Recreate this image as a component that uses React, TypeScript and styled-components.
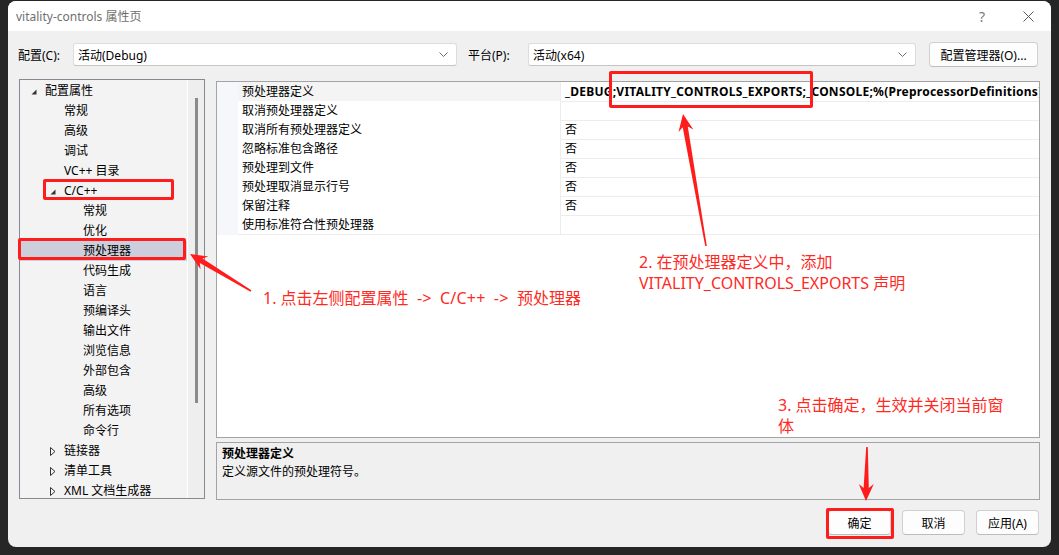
import React from 'react';
import styled, { createGlobalStyle } from 'styled-components';

const UI_FONT = `"Noto Sans", "Noto Sans CJK SC", sans-serif`;
const RED = '#ff1c1c';

type Expander = 'open' | 'closed' | undefined;

interface TreeItem {
	label: string;
	level: number;
	expander?: Expander;
	selected?: boolean;
}

const treeItems: TreeItem[] = [
	{ label: '配置属性', level: 0, expander: 'open' },
	{ label: '常规', level: 1 },
	{ label: '高级', level: 1 },
	{ label: '调试', level: 1 },
	{ label: 'VC++ 目录', level: 1 },
	{ label: 'C/C++', level: 1, expander: 'open' },
	{ label: '常规', level: 2 },
	{ label: '优化', level: 2 },
	{ label: '预处理器', level: 2, selected: true },
	{ label: '代码生成', level: 2 },
	{ label: '语言', level: 2 },
	{ label: '预编译头', level: 2 },
	{ label: '输出文件', level: 2 },
	{ label: '浏览信息', level: 2 },
	{ label: '外部包含', level: 2 },
	{ label: '高级', level: 2 },
	{ label: '所有选项', level: 2 },
	{ label: '命令行', level: 2 },
	{ label: '链接器', level: 1, expander: 'closed' },
	{ label: '清单工具', level: 1, expander: 'closed' },
	{ label: 'XML 文档生成器', level: 1, expander: 'closed' }
];

const properties = [
	{ name: '预处理器定义', value: '_DEBUG;VITALITY_CONTROLS_EXPORTS;_CONSOLE;%(PreprocessorDefinitions)', selected: true },
	{ name: '取消预处理器定义', value: '' },
	{ name: '取消所有预处理器定义', value: '否' },
	{ name: '忽略标准包含路径', value: '否' },
	{ name: '预处理到文件', value: '否' },
	{ name: '预处理取消显示行号', value: '否' },
	{ name: '保留注释', value: '否' },
	{ name: '使用标准符合性预处理器', value: '' }
];

// tail -> tip, tapered shaft with a barbed head
function arrowPoints(x1: number, y1: number, x2: number, y2: number) {
	const dx = x2 - x1;
	const dy = y2 - y1;
	const len = Math.hypot(dx, dy);
	const ux = dx / len;
	const uy = dy / len;
	const nx = -uy;
	const ny = ux;
	const head = 17;
	const at = (d: number, w: number) => [x1 + ux * d + nx * w, y1 + uy * d + ny * w];
	const pts = [
		at(0, 0.8),
		at(len - head + 4, 2.6),
		at(len - head, 7.5),
		[x2, y2],
		at(len - head, -7.5),
		at(len - head + 4, -2.6),
		at(0, -0.8)
	];
	return pts.map(p => p.map(v => v.toFixed(1)).join(',')).join(' ');
}

export default function App() {
	return (
		<Screen>
			<GlobalStyle />
			<Dialog>
				<TitleBar>
					<span>vitality-controls 属性页</span>
					<TitleButtons>
						<TitleButton>?</TitleButton>
						<TitleButton>
							<svg width="11" height="11" viewBox="0 0 11 11">
								<path d="M0.5 0.5 L10.5 10.5 M10.5 0.5 L0.5 10.5" stroke="#5a5a5a" strokeWidth="1" />
							</svg>
						</TitleButton>
					</TitleButtons>
				</TitleBar>

				<Body>
					<ConfigRow>
						<FieldLabel $width={55}>配置(C):</FieldLabel>
						<Select $width={384}>
							<span>活动(Debug)</span>
							<Chevron />
						</Select>
						<FieldLabel $width={60}>平台(P):</FieldLabel>
						<Select $width={388}>
							<span>活动(x64)</span>
							<Chevron />
						</Select>
						<ManagerButton>配置管理器(O)...</ManagerButton>
					</ConfigRow>

					<Main>
						<TreePanel>
							<TreeList>
								{treeItems.map((item, i) => (
									<TreeRow key={i} $level={item.level} $selected={item.selected}>
										<ExpanderSlot>
											{item.expander === 'open' && (
												<svg width="6" height="6" viewBox="0 0 6 6">
													<polygon points="5.5,0.5 5.5,5.5 0.5,5.5" fill="#333" />
												</svg>
											)}
											{item.expander === 'closed' && (
												<svg width="6" height="9" viewBox="0 0 6 9">
													<polygon points="0.5,0.5 5,4.5 0.5,8.5" fill="none" stroke="#333" strokeWidth="1" />
												</svg>
											)}
										</ExpanderSlot>
										<span>{item.label}</span>
									</TreeRow>
								))}
							</TreeList>
							<ScrollTrack>
								<ScrollThumb />
							</ScrollTrack>
						</TreePanel>

						<RightColumn>
							<Grid>
								{properties.map((p, i) => (
									<PropRow key={i}>
										<GutterCell />
										<NameCell $selected={p.selected}>{p.name}</NameCell>
										<ValueCell $bold={p.selected}>{p.value}</ValueCell>
									</PropRow>
								))}
							</Grid>
							<Description>
								<DescTitle>预处理器定义</DescTitle>
								<div>定义源文件的预处理符号。</div>
							</Description>
						</RightColumn>
					</Main>

					<Footer>
						<DialogButton>确定</DialogButton>
						<DialogButton>取消</DialogButton>
						<DialogButton>应用(A)</DialogButton>
					</Footer>
				</Body>
			</Dialog>

			<Overlay>
				<RedBox $x={43} $y={179} $w={131} $h={21} />
				<RedBox $x={18} $y={238} $w={168} $h={22} />
				<RedBox $x={609} $y={71} $w={204} $h={37} />
				<RedBox $x={826} $y={508} $w={68} $h={31} />
				<ArrowLayer width="1059" height="555" viewBox="0 0 1059 555">
					<polygon points={arrowPoints(251, 291, 190, 254)} fill={RED} />
					<polygon points={arrowPoints(706, 246, 683, 114)} fill={RED} />
					<polygon points={arrowPoints(867, 447, 866, 501)} fill={RED} />
				</ArrowLayer>
				<Note $x={263} $y={288}>
					1. 点击左侧配置属性<Spaced> -&gt; C/C++ -&gt; </Spaced>预处理器
				</Note>
				<Note $x={639} $y={252}>
					2. 在预处理器定义中，添加
					<br />
					VITALITY_CONTROLS_EXPORTS 声明
				</Note>
				<Note $x={778} $y={395}>
					3. 点击确定，生效并关闭当前窗
					<br />
					体
				</Note>
			</Overlay>
		</Screen>
	);
}

function Chevron() {
	return (
		<ChevronIcon width="9" height="5" viewBox="0 0 9 5">
			<polyline points="0.5,0.5 4.5,4.5 8.5,0.5" fill="none" stroke="#6a6a6a" strokeWidth="1" />
		</ChevronIcon>
	);
}

const GlobalStyle = createGlobalStyle`
	html, body {
		margin: 0;
		padding: 0;
		background: #1f1f1f;
	}

	body {
		font-family: ${UI_FONT};
		font-size: 12px;
		color: #000;
	}

	* {
		box-sizing: border-box;
	}
`;

const Screen = styled.div`
	position: relative;
	width: 1059px;
	height: 555px;
	padding: 1px 8px 8px 8px;
	background: #262626;
	display: flex;
	overflow: hidden;
`;

const Dialog = styled.div`
	flex: 1;
	display: flex;
	flex-direction: column;
	background: #f0f0f0;
	border-radius: 8px;
	overflow: hidden;
`;

const TitleBar = styled.div`
	height: 30px;
	flex: none;
	display: flex;
	align-items: center;
	padding-left: 8px;
	background: #fff;
	color: #6f6f6f;
	font-size: 12px;
`;

const TitleButtons = styled.div`
	margin-left: auto;
	display: flex;
`;

const TitleButton = styled.div`
	width: 46px;
	height: 30px;
	display: flex;
	align-items: center;
	justify-content: center;
	color: #7a7a7a;
	font-size: 14px;
`;

const Body = styled.div`
	flex: 1;
	display: flex;
	flex-direction: column;
	padding: 11px 11px 12px 11px;
`;

const ConfigRow = styled.div`
	height: 25px;
	display: flex;
	align-items: center;
	margin-left: -1px;
`;

const FieldLabel = styled.label<{ $width: number }>`
	width: ${p => p.$width}px;
	flex: none;
	white-space: nowrap;
`;

const Select = styled.div<{ $width: number }>`
	width: ${p => p.$width}px;
	height: 23px;
	flex: none;
	margin-right: 11px;
	display: flex;
	align-items: center;
	padding: 0 8px 0 4px;
	background: #fff;
	border: 1px solid #dcdcdc;
	border-bottom-color: #c4c4c4;
	border-radius: 3px;
`;

const ChevronIcon = styled.svg`
	margin-left: auto;
`;

const ManagerButton = styled.div`
	width: 109px;
	height: 25px;
	margin-left: 2px;
	display: flex;
	align-items: center;
	justify-content: center;
	background: #fdfdfd;
	border: 1px solid #d0d0d0;
	border-bottom-color: #bcbcbc;
	border-radius: 4px;
`;

const Main = styled.div`
	margin-top: 12px;
	height: 421px;
	display: flex;
	gap: 11px;
`;

const TreePanel = styled.div`
	width: 186px;
	height: 420px;
	flex: none;
	display: flex;
	border: 1px solid #858a92;
	background: #f3f3f3;
	overflow: hidden;
`;

const TreeList = styled.div`
	flex: 1;
	padding-top: 1px;
`;

const TreeRow = styled.div<{ $level: number; $selected?: boolean }>`
	height: 20px;
	display: flex;
	align-items: center;
	padding-left: ${p => 11 + p.$level * 19}px;
	background: ${p => (p.$selected ? '#cccedb' : 'transparent')};
	white-space: nowrap;
	line-height: 20px;
`;

const ExpanderSlot = styled.span`
	width: 14px;
	flex: none;
	display: flex;
	align-items: center;
	padding-top: 1px;
`;

const ScrollTrack = styled.div`
	width: 17px;
	flex: none;
	border-left: 1px solid #fff;
	background: #eeeeee;
	display: flex;
	justify-content: center;
`;

const ScrollThumb = styled.div`
	width: 3px;
	height: 305px;
	margin-top: 18px;
	margin-left: 1px;
	background: #8a8a8a;
`;

const RightColumn = styled.div`
	flex: 1;
	display: flex;
	flex-direction: column;
	padding-top: 2px;
`;

const Grid = styled.div`
	height: 357px;
	border: 1px solid #a3a3a3;
	background: #fff;
	overflow: hidden;
`;

const PropRow = styled.div`
	height: 19px;
	display: grid;
	grid-template-columns: 21px 323px 1fr;
	line-height: 18px;
`;

const GutterCell = styled.div`
	background: #f6f7fa;
`;

const NameCell = styled.div<{ $selected?: boolean }>`
	padding: 1px 0 0 4px;
	border-right: 1px solid #ededed;
	border-bottom: 1px solid #ededed;
	background: ${p => (p.$selected ? '#f4f4f4' : '#fff')};
	white-space: nowrap;
`;

const ValueCell = styled.div<{ $bold?: boolean }>`
	padding: 1px 0 0 4px;
	border-bottom: 1px solid #ededed;
	font-weight: ${p => (p.$bold ? 700 : 400)};
	letter-spacing: ${p => (p.$bold ? '0.25px' : '0')};
	white-space: nowrap;
	overflow: hidden;
`;

const Description = styled.div`
	height: 58px;
	margin-top: 4px;
	padding: 2px 5px 0 5px;
	border: 1px solid #a3a3a3;
	background: #f0f0f0;
	line-height: 18px;
`;

const DescTitle = styled.div`
	font-weight: 700;
`;

const Footer = styled.div`
	margin-top: 10px;
	height: 25px;
	display: flex;
	justify-content: flex-end;
	gap: 11px;
	padding-right: 1px;
`;

const DialogButton = styled.div`
	width: 63px;
	height: 25px;
	display: flex;
	align-items: center;
	justify-content: center;
	background: #fdfdfd;
	border: 1px solid #d0d0d0;
	border-bottom-color: #bcbcbc;
	border-radius: 4px;
`;

const Overlay = styled.div`
	position: absolute;
	inset: 0;
	pointer-events: none;
`;

const RedBox = styled.div<{ $x: number; $y: number; $w: number; $h: number }>`
	position: absolute;
	left: ${p => p.$x}px;
	top: ${p => p.$y}px;
	width: ${p => p.$w}px;
	height: ${p => p.$h}px;
	border: 3px solid ${RED};
	border-radius: 2px;
`;

const ArrowLayer = styled.svg`
	position: absolute;
	left: 0;
	top: 0;
`;

const Note = styled.div<{ $x: number; $y: number }>`
	position: absolute;
	left: ${p => p.$x}px;
	top: ${p => p.$y}px;
	color: #ff2a1f;
	font-size: 16px;
	line-height: 21px;
	white-space: nowrap;
`;

const Spaced = styled.span`
	word-spacing: 4px;
	letter-spacing: 0.2px;
`;
